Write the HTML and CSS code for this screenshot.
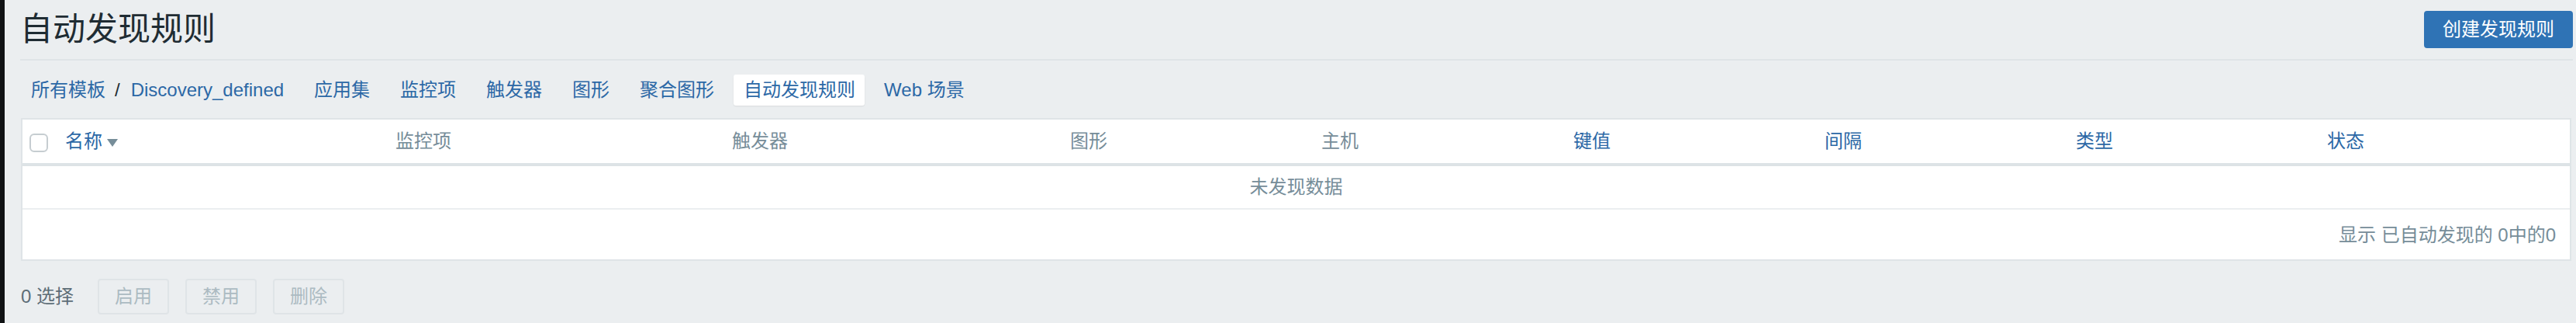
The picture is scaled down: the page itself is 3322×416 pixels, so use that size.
FILE: index.html
```html
<!DOCTYPE html>
<html lang="zh-CN">
<head>
<meta charset="utf-8">
<title>自动发现规则</title>
<link rel="stylesheet" href="styles.css">
</head>
<body>
<div class="screen">
  <div class="edge"></div>
  <main class="main">
    <header class="page-header">
      <h1 class="page-title">自动发现规则</h1>
      <button class="btn-primary" type="button">创建发现规则</button>
    </header>
    <nav class="crumbs">
      <ul class="crumb-list">
        <li class="crumb-item"><a class="link">所有模板</a><span class="sep">/</span><a class="link">Discovery_defined</a></li>
        <li class="crumb-item"><a class="link">应用集</a></li>
        <li class="crumb-item"><a class="link">监控项</a></li>
        <li class="crumb-item"><a class="link">触发器</a></li>
        <li class="crumb-item"><a class="link">图形</a></li>
        <li class="crumb-item"><a class="link">聚合图形</a></li>
        <li class="crumb-item selected"><span class="link">自动发现规则</span></li>
        <li class="crumb-item"><a class="link">Web 场景</a></li>
      </ul>
    </nav>
    <section class="list">
      <table class="list-table">
        <colgroup>
          <col class="c-cb"><col class="c-name"><col class="c-items"><col class="c-triggers">
          <col class="c-std"><col class="c-std2"><col class="c-std"><col class="c-std">
          <col class="c-std"><col class="c-last">
        </colgroup>
        <thead>
          <tr>
            <th class="cb-cell"><span class="checkbox"></span></th>
            <th><a class="link">名称</a><span class="arrow-down"></span></th>
            <th class="muted">监控项</th>
            <th class="muted">触发器</th>
            <th class="muted">图形</th>
            <th class="muted">主机</th>
            <th><a class="link">键值</a></th>
            <th><a class="link">间隔</a></th>
            <th><a class="link">类型</a></th>
            <th><a class="link">状态</a></th>
          </tr>
        </thead>
        <tbody>
          <tr>
            <td class="nothing" colspan="10">未发现数据</td>
          </tr>
        </tbody>
      </table>
      <div class="paging">显示 已自动发现的 0中的0</div>
    </section>
    <div class="actions">
      <span class="selected-count">0 选择</span>
      <button class="btn-alt" type="button" disabled>启用</button>
      <button class="btn-alt" type="button" disabled>禁用</button>
      <button class="btn-alt" type="button" disabled>删除</button>
    </div>
  </main>
</div>
</body>
</html>
```

FILE: styles.css
```css
html, body {
  margin: 0;
  padding: 0;
  background: #ebeef0;
}

body {
  font-family: "Liberation Sans", "Noto Sans CJK SC", sans-serif;
  font-size: 24px;
  color: #1f2c33;
  height: 416px;
  overflow: hidden;
}

.screen {
  display: flex;
  height: 416px;
}

.edge {
  width: 6px;
  flex: none;
  background: #101214;
}

.main {
  flex: 1;
  min-width: 0;
  padding: 0 4px 0 20px;
}

/* header */
.page-header {
  display: flex;
  align-items: center;
  justify-content: space-between;
  height: 48px;
  padding: 14px 0;
  border-bottom: 2px solid #dfe4e7;
}

.page-title {
  margin: 0;
  font-size: 42px;
  font-weight: normal;
  line-height: 48px;
  color: #1f2c33;
}

.btn-primary {
  height: 48px;
  padding: 0 22px;
  border: 2px solid #2f73b5;
  border-radius: 4px;
  background: #2f73b5;
  color: #ffffff;
  font-family: inherit;
  font-size: 24px;
  line-height: 44px;
}

/* navigation */
.crumbs {
  margin: 18px 0 16px;
}

.crumb-list {
  display: flex;
  gap: 11px;
  margin: 0;
  padding: 0;
  list-style: none;
  height: 40px;
}

.crumb-item {
  display: flex;
  align-items: center;
  padding: 0 14px;
  height: 40px;
  line-height: 40px;
  border-radius: 3px;
}

.crumb-item.selected {
  padding: 0 12px 0 13px;
  background: #ffffff;
  box-shadow: 0 1px 2px rgba(0, 0, 0, 0.08);
}

.link {
  color: #2c68a6;
  text-decoration: none;
}

.sep {
  margin: 0 14px 0 12px;
  color: #1f2c33;
}

/* list table */
.list {
  margin: 0 2px 0 1px;
  border: 2px solid #dfe4e7;
  background: #ffffff;
}

.list-table {
  width: 100%;
  table-layout: fixed;
  border-collapse: separate;
  border-spacing: 0;
}

.c-cb { width: 45px; }
.c-name { width: 426px; }
.c-items { width: 434px; }
.c-triggers { width: 436px; }
.c-std { width: 324px; }
.c-std2 { width: 325px; }
.c-last { width: 323px; }

.list-table th {
  height: 56px;
  padding: 0 10px;
  line-height: 56px;
  text-align: left;
  font-weight: normal;
  white-space: nowrap;
  border-bottom: 4px solid #dde3e6;
}

.list-table th.cb-cell {
  padding: 0 0 0 9px;
}

.list-table th.muted {
  color: #768d99;
}

.checkbox {
  display: inline-block;
  width: 20px;
  height: 20px;
  border: 2px solid #c6cdd1;
  border-radius: 6px;
  background: #ffffff;
  vertical-align: middle;
}

.arrow-down {
  display: inline-block;
  width: 0;
  height: 0;
  margin-left: 6px;
  border-top: 10px solid #768d99;
  border-left: 7px solid transparent;
  border-right: 7px solid transparent;
  vertical-align: middle;
}

.list-table td {
  height: 54px;
  padding: 0 10px;
  line-height: 54px;
  border-bottom: 2px solid #ebeef0;
}

.list-table td.nothing {
  text-align: center;
  color: #768d99;
}

.paging {
  height: 64px;
  padding: 0 18px;
  line-height: 66px;
  text-align: right;
  color: #768d99;
}

/* footer actions */
.actions {
  display: flex;
  align-items: center;
  margin-top: 23px;
  padding-left: 1px;
  height: 46px;
}

.selected-count {
  margin-right: 31px;
  color: #5d6d77;
  line-height: 46px;
}

.btn-alt {
  height: 46px;
  margin-right: 21px;
  padding: 0 20px;
  border: 2px solid #dfe4e7;
  border-radius: 4px;
  background: #ebeef0;
  color: #acbbc2;
  font-family: inherit;
  font-size: 24px;
  line-height: 42px;
}
```
